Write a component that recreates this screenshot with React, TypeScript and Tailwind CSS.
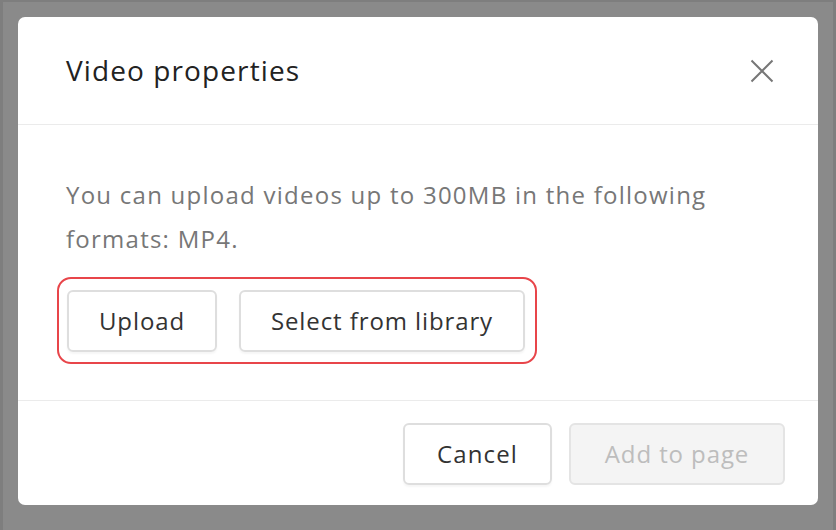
import React from 'react';

const font = { fontFamily: '"Open Sans", "Noto Sans", sans-serif' };

export default function App() {
  return (
    <div
      className="w-[836px] h-[530px] bg-[#8a8a8a] border-x-[3px] border-t-[2px] border-[#7e7e7e] flex items-start justify-center pt-[15px]"
      style={font}
    >
      <div className="w-[800px] h-[488px] bg-white rounded-[7px] flex flex-col">
        {/* header */}
        <div className="h-[108px] border-b border-[#ebebeb] flex items-center justify-between pl-[48px] pr-[44px]">
          <h2 className="text-[28px] tracking-[1.1px] text-[#222] leading-none -mt-[2px]">Video properties</h2>
          <button className="w-[24px] h-[24px] flex items-center justify-center text-[#777]">
            <svg width="24" height="24" viewBox="0 0 24 24" fill="none" stroke="currentColor" strokeWidth="2">
              <path d="M1.5 1.5 L22.5 22.5 M22.5 1.5 L1.5 22.5" />
            </svg>
          </button>
        </div>

        {/* body */}
        <div className="flex-1 border-b border-[#ebebeb] pl-[48px] pr-[40px] pt-[48px]">
          <p className="text-[24px] tracking-[1.25px] leading-[44px] text-[#777] w-[700px]">
            You can upload videos up to 300MB in the following formats: MP4.
          </p>
          <div className="mt-[16px] -ml-[9px] inline-flex gap-[22px] pl-[8px] pr-[10px] py-[10.5px] border-2 border-[#e8454a] rounded-[14px]">
            <button className="h-[62px] w-[150px] border-2 border-[#dedede] rounded-[6px] text-[24px] tracking-[0.9px] text-[#333] shadow-[0_2px_2px_rgba(0,0,0,0.04)]">
              Upload
            </button>
            <button className="h-[62px] w-[286px] border-2 border-[#dedede] rounded-[6px] text-[24px] tracking-[0.9px] text-[#333] shadow-[0_2px_2px_rgba(0,0,0,0.04)]">
              Select from library
            </button>
          </div>
        </div>

        {/* footer */}
        <div className="h-[104px] flex items-center justify-end gap-[17px] pr-[33px] pt-[2px]">
          <button className="h-[62px] w-[149px] border-2 border-[#dedede] rounded-[6px] text-[24px] tracking-[1.1px] text-[#333] shadow-[0_2px_2px_rgba(0,0,0,0.04)]">
            Cancel
          </button>
          <button className="h-[62px] w-[216px] border-2 border-[#e4e4e4] bg-[#f4f4f4] rounded-[6px] text-[24px] tracking-[0.9px] text-[#bdbdbd]">
            Add to page
          </button>
        </div>
      </div>
    </div>
  );
}
